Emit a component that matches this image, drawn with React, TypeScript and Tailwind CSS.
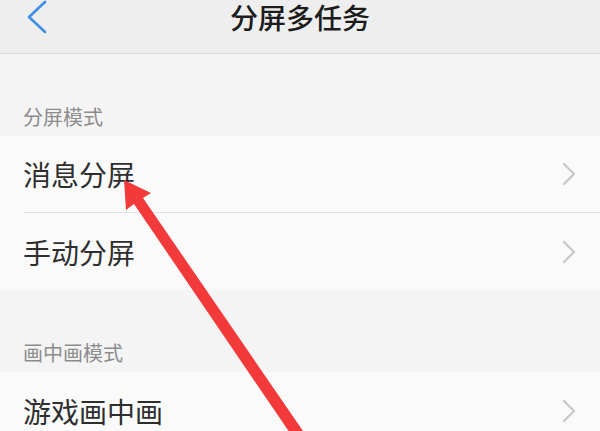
import React from "react";

const font = { fontFamily: '"Noto Sans CJK SC", "Noto Sans", sans-serif' };

function Chevron() {
  return (
    <svg width="16" height="24" viewBox="0 0 16 24" className="shrink-0">
      <polyline points="3,2 13,12 3,22" fill="none" stroke="#c9c9c9" strokeWidth="2.4" strokeLinecap="round" strokeLinejoin="round" />
    </svg>
  );
}

function Row({ label, divider }: { label: string; divider?: boolean }) {
  return (
    <div className="bg-[#fafafa] pl-[23px]">
      <div className={`flex h-[77px] items-center justify-between pr-[23px] ${divider ? "border-b border-[#e2e2e2]" : ""}`}>
        <span className="text-[28px] leading-none text-[#2e2e2e]">{label}</span>
        <Chevron />
      </div>
    </div>
  );
}

function SectionLabel({ text }: { text: string }) {
  return (
    <div className="bg-[#f4f4f4] pl-[23px] pt-[53px] pb-[9px]">
      <div className="text-[20px] leading-[20px] text-[#8c8c8c]">{text}</div>
    </div>
  );
}

export default function App() {
  return (
    <div className="relative h-[431px] w-[600px] overflow-hidden bg-[#f4f4f4]" style={font}>
      <div className="relative flex h-[54px] justify-center border-b border-[#dadada] bg-[#eeeeee] pt-[3px]">
        <svg width="24" height="34" viewBox="0 0 24 34" className="absolute left-[24px] top-0">
          <polyline points="21,2 5,17 21,32" fill="none" stroke="#3d8fe6" strokeWidth="2.6" strokeLinecap="round" strokeLinejoin="round" />
        </svg>
        <span className="text-[28px] font-medium leading-[28px] text-[#1c1c1c]">分屏多任务</span>
      </div>
      <SectionLabel text="分屏模式" />
      <Row label="消息分屏" divider />
      <Row label="手动分屏" />
      <SectionLabel text="画中画模式" />
      <Row label="游戏画中画" />
      <svg className="pointer-events-none absolute left-0 top-0" width="600" height="431" viewBox="0 0 600 431">
        <polygon
          points="124,180 151,193 143,198 303,431 292,436 134,204 126,210"
          fill="#f23a3a"
        />
      </svg>
    </div>
  );
}
